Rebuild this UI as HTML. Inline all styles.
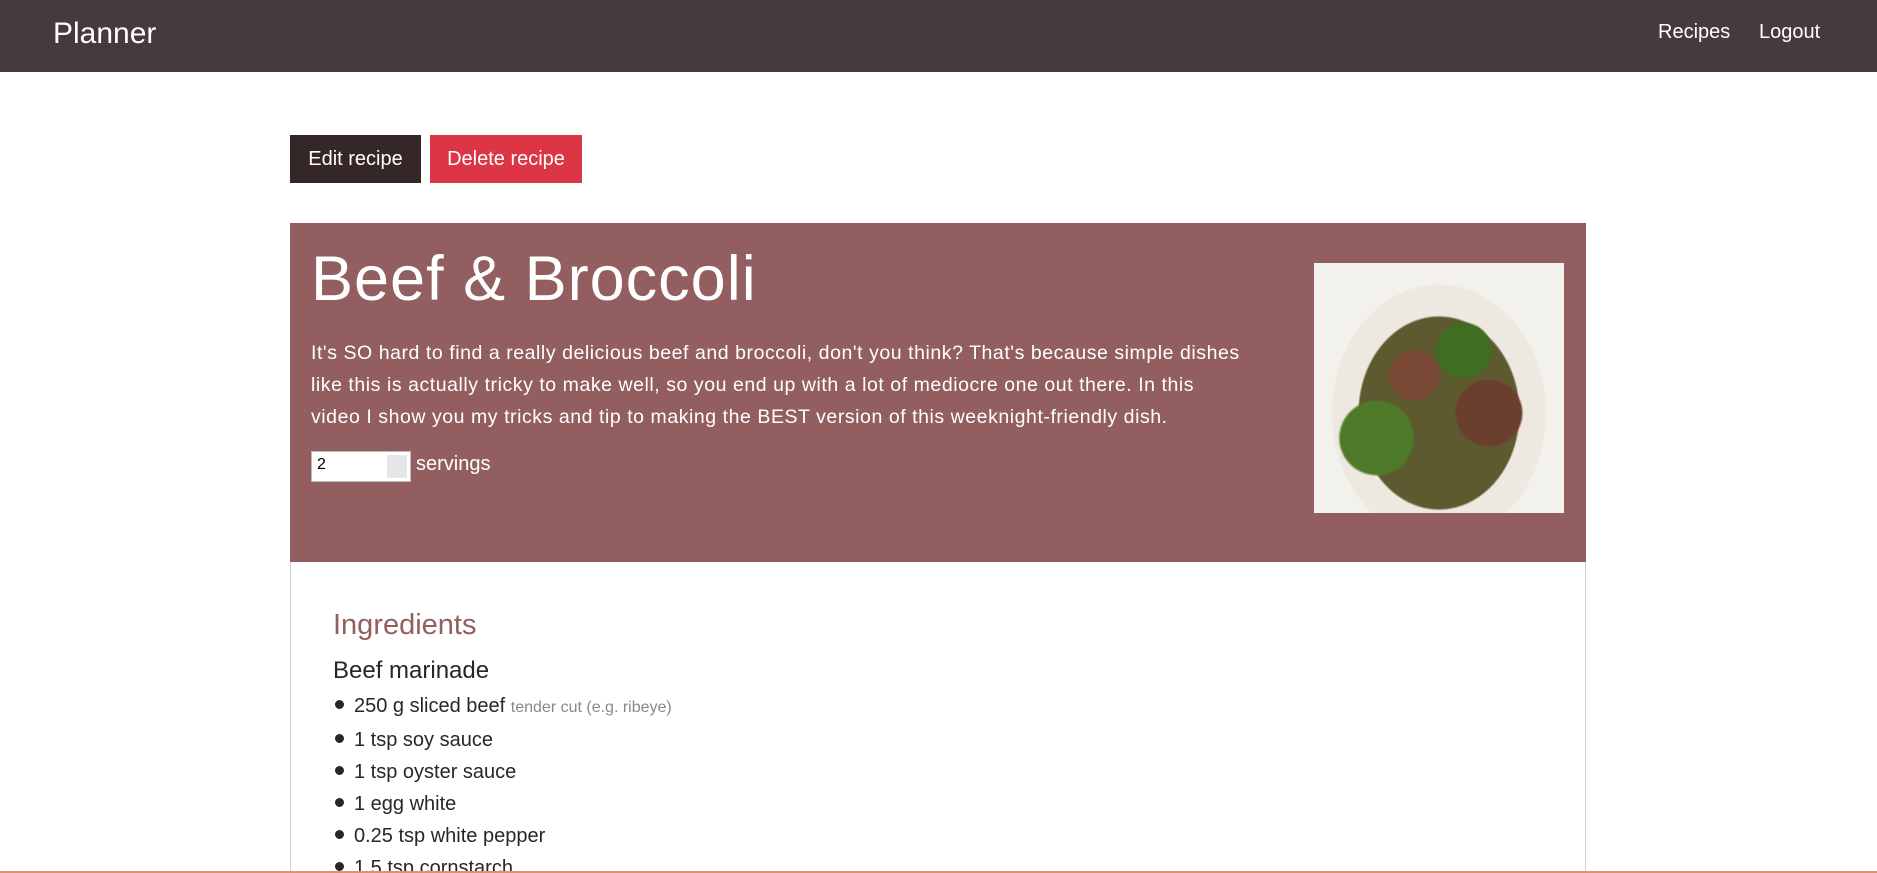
<!DOCTYPE html>
<html><head><meta charset="utf-8"><style>
*{box-sizing:border-box;margin:0;padding:0}
html,body{width:1877px;height:873px;overflow:hidden}
body{background:#fff;font-family:"Liberation Sans",sans-serif;color:#2a2526;position:relative}
.nav{position:absolute;left:0;top:0;width:1877px;height:72px;background:#473a3c;color:#fff}
.brand{position:absolute;left:53px;top:17px;font-size:30px}
.nl{position:absolute;top:21px;font-size:20px}
.btn{position:absolute;top:135px;height:48px;color:#fff;font-size:20px;line-height:48px;text-align:center}
.card{position:absolute;left:290px;top:223px;width:1296px;height:660px;border:1px solid #d0d0d0}
.hdr{position:absolute;left:-1px;top:-1px;width:1296px;height:339px;background:#935e60;color:#fff}
h1{position:absolute;left:21px;top:20px;font-size:63px;font-weight:normal;letter-spacing:1px}
.p{position:absolute;left:21px;top:114px;white-space:nowrap;font-size:19.5px;line-height:32px;letter-spacing:0.55px}
.inp{position:absolute;left:21px;top:228px;width:100px;height:31px;background:#fff;border:1px solid #bbb;color:#000;font-size:16px;padding:4px 5px}
.spin{position:absolute;right:3px;top:3px;width:20px;height:23px;background:#e6e6e9}
.sv{position:absolute;left:126px;top:230px;font-size:20px}
.img{position:absolute;left:1024px;top:40px;width:250px;height:250px;background:
radial-gradient(circle at 40% 45%,#7a4a36 0 12%,transparent 13%),
radial-gradient(circle at 70% 60%,#6b3f2e 0 14%,transparent 15%),
radial-gradient(circle at 25% 70%,#4f7a2a 0 14%,transparent 15%),
radial-gradient(circle at 60% 35%,#3f6e22 0 12%,transparent 13%),
radial-gradient(ellipse at 50% 60%,#5d5a30 0 45%,#eee9e0 46% 60%,#f3f1ec 61%)}
.ing{position:absolute;left:42px;top:385px;font-size:29px;color:#935e60}
.sub{position:absolute;left:42px;top:433px;font-size:24px}
ul{position:absolute;left:42px;top:466px;list-style:none;font-size:20px;line-height:32px}
li:before{content:"";display:inline-block;width:9px;height:9px;border-radius:50%;background:#2a2526;margin:0 10px 3px 2px}
.n{color:#888;font-size:16px}
</style></head><body>
<div class="nav"><div class="brand">Planner</div><div class="nl" style="left:1658px">Recipes</div><div class="nl" style="left:1759px">Logout</div></div>
<div class="btn" style="left:290px;width:131px;background:#352628">Edit recipe</div>
<div class="btn" style="left:430px;width:152px;background:#dc3545">Delete recipe</div>
<div class="card">
<div class="hdr">
<h1>Beef &amp; Broccoli</h1>
<div class="p">It's SO hard to find a really delicious beef and broccoli, don't you think? That's because simple dishes<br>like this is actually tricky to make well, so you end up with a lot of mediocre one out there. In this<br>video I show you my tricks and tip to making the BEST version of this weeknight-friendly dish.</div>
<div class="inp">2<div class="spin"></div></div>
<div class="sv">servings</div>
<div class="img"></div>
</div>
<div class="ing">Ingredients</div>
<div class="sub">Beef marinade</div>
<ul>
<li>250 g sliced beef <span class="n">tender cut (e.g. ribeye)</span></li>
<li>1 tsp soy sauce</li>
<li>1 tsp oyster sauce</li>
<li>1 egg white</li>
<li>0.25 tsp white pepper</li>
<li>1.5 tsp cornstarch</li>
</ul>
</div>
<div style="position:absolute;left:0;top:871px;width:1877px;height:2px;background:#e0906a"></div>
</body></html>
